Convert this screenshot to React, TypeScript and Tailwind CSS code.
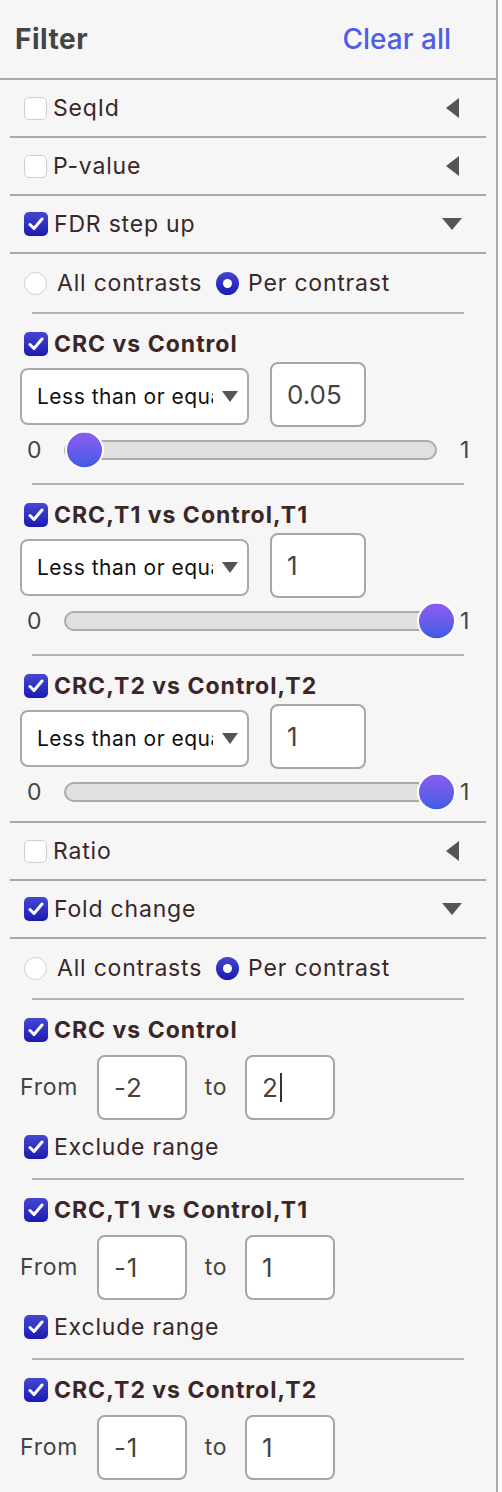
import React from "react";

const labelText = "text-[23px] tracking-[0.8px] text-[#3b2628]";

function Checkbox({ checked }: { checked: boolean }) {
  if (!checked) {
    return <span className="block h-[23px] w-[23px] shrink-0 rounded-[5px] border border-[#cfcfcf] bg-white" />;
  }
  return (
    <span className="flex h-[24px] w-[24px] shrink-0 items-center justify-center rounded-[5px] bg-gradient-to-b from-[#4547d2] to-[#1d18b0]">
      <svg width="16" height="14" viewBox="0 0 16 14">
        <path d="M2 7.5 L6 11.5 L14 2" fill="none" stroke="#fff" strokeWidth="3" strokeLinecap="round" strokeLinejoin="round" />
      </svg>
    </span>
  );
}

function Radio({ checked }: { checked: boolean }) {
  if (!checked) {
    return <span className="block h-[23px] w-[23px] shrink-0 rounded-full border border-[#cfcfcf] bg-white" />;
  }
  return (
    <span className="flex h-[23px] w-[23px] shrink-0 items-center justify-center rounded-full bg-gradient-to-b from-[#4245d0] to-[#1d18b0]">
      <span className="block h-[9px] w-[9px] rounded-full bg-white" />
    </span>
  );
}

function CaretLeft() {
  return (
    <svg width="13" height="20" viewBox="0 0 13 20" className="ml-auto">
      <polygon points="13,0 0,10 13,20" fill="#555" />
    </svg>
  );
}

function CaretDown() {
  return (
    <svg width="20" height="12" viewBox="0 0 20 12" className="ml-auto -mr-[3px]">
      <polygon points="0,0 20,0 10,12" fill="#555" />
    </svg>
  );
}

function SectionRow({ label, checked, open }: { label: string; checked: boolean; open?: boolean }) {
  return (
    <div className="flex h-[58px] items-center border-b-2 border-[#aaa] pl-[14px] pr-[27px]">
      <Checkbox checked={checked} />
      <span className={`ml-[6px] ${labelText}`}>{label}</span>
      {open ? <CaretDown /> : <CaretLeft />}
    </div>
  );
}

function RadioRow({ h }: { h: string }) {
  return (
    <div className={`flex items-center pl-[14px] ${h}`}>
      <Radio checked={false} />
      <span className={`ml-[10px] ${labelText}`}>All contrasts</span>
      <span className="ml-[14px]">
        <Radio checked />
      </span>
      <span className={`ml-[9px] ${labelText}`}>Per contrast</span>
    </div>
  );
}

function InnerSep() {
  return <div className="mx-[22px] h-[2px] bg-[#b3b3b3]" />;
}

function ContrastTitle({ title }: { title: string }) {
  return (
    <div className="flex h-[24px] items-center pl-[14px]">
      <Checkbox checked />
      <span className="ml-[6px] text-[23px] font-bold tracking-[1px] text-[#3b2628]">{title}</span>
    </div>
  );
}

function Slider({ atMax }: { atMax: boolean }) {
  return (
    <div className="mt-[3px] flex h-[40px] items-center pl-[17px] text-[23px] text-[#444]">
      <span className="w-[37px]">0</span>
      <div className="relative h-[20px] w-[373px] rounded-full border-2 border-[#ababab] bg-[#e0e0e0]">
        <span
          className={`absolute top-1/2 h-[39px] w-[39px] -translate-y-1/2 rounded-full border-2 border-white bg-gradient-to-b from-[#8c5cf0] to-[#3d5be4] ${
            atMax ? "left-[351px]" : "-left-[1px]"
          }`}
        />
      </div>
      <span className="ml-[23px]">1</span>
    </div>
  );
}

function FdrContrast({ title, value, atMax, last }: { title: string; value: string; atMax: boolean; last?: boolean }) {
  return (
    <div className={`pt-[18px] ${last ? "pb-[9px]" : "pb-[13px]"}`}>
      <ContrastTitle title={title} />
      <div className="mt-[6px] flex h-[65px] items-start pl-[10px]">
        <div className="mt-[6px] flex h-[57px] w-[229px] items-center rounded-[8px] border-2 border-[#aaa] bg-white pl-[15px]">
          <span className="w-[176px] overflow-hidden whitespace-nowrap text-[21px] tracking-[0.5px] text-[#111]">
            Less than or equal to
          </span>
          <svg width="16" height="11" viewBox="0 0 16 11" className="ml-[9px]">
            <polygon points="0,0 16,0 8,11" fill="#555" />
          </svg>
        </div>
        <div className="ml-[21px] flex h-[65px] w-[96px] items-center rounded-[8px] border-2 border-[#a6a6a6] bg-white pl-[15px] text-[26px] text-[#444]">
          {value}
        </div>
      </div>
      <Slider atMax={atMax} />
    </div>
  );
}

function NumBox({ value, caret }: { value: string; caret?: boolean }) {
  return (
    <div className="flex h-[65px] w-[90px] items-center rounded-[8px] border-2 border-[#a6a6a6] bg-white pl-[15px] text-[26px] text-[#444]">
      {value}
      {caret && <span className="ml-[1px] block h-[29px] w-[2px] bg-[#333]" />}
    </div>
  );
}

function FoldContrast({ title, from, to, caret }: { title: string; from: string; to: string; caret?: boolean }) {
  return (
    <div className="pt-[18px] pb-[19px]">
      <ContrastTitle title={title} />
      <div className="mt-[13px] flex h-[65px] items-center pl-[10px] text-[23px] tracking-[0.8px] text-[#444]">
        <span className="w-[77px]">From</span>
        <NumBox value={from} />
        <span className="w-[58px] text-center">to</span>
        <NumBox value={to} caret={caret} />
      </div>
      <div className="mt-[15px] flex h-[24px] items-center pl-[14px]">
        <Checkbox checked />
        <span className={`ml-[6px] ${labelText}`}>Exclude range</span>
      </div>
    </div>
  );
}

export default function App() {
  return (
    <div className="min-h-screen w-[498px] border-r-2 border-[#aaa] bg-[#f6f6f6] font-['Inter','Liberation_Sans',sans-serif]">
      {/* Header */}
      <div className="flex h-[80px] items-center justify-between border-b-2 border-[#aaa] pl-[15px] pr-[45px]">
        <h1 className="text-[28px] font-bold tracking-[0.5px] text-[#444]">Filter</h1>
        <button className="text-[28px] font-medium text-[#4e5ee8]">Clear all</button>
      </div>

      <div className="px-[10px]">
        <SectionRow label="SeqId" checked={false} />
        <SectionRow label="P-value" checked={false} />
        <SectionRow label="FDR step up" checked open />

        <div className="border-b-2 border-[#aaa]">
          <RadioRow h="h-[58px]" />
          <InnerSep />
          <FdrContrast title="CRC vs Control" value="0.05" atMax={false} />
          <InnerSep />
          <FdrContrast title="CRC,T1 vs Control,T1" value="1" atMax />
          <InnerSep />
          <FdrContrast title="CRC,T2 vs Control,T2" value="1" atMax last />
        </div>

        <SectionRow label="Ratio" checked={false} />
        <SectionRow label="Fold change" checked open />

        <div>
          <RadioRow h="h-[59px]" />
          <InnerSep />
          <FoldContrast title="CRC vs Control" from="-2" to="2" caret />
          <InnerSep />
          <FoldContrast title="CRC,T1 vs Control,T1" from="-1" to="1" />
          <InnerSep />
          <FoldContrast title="CRC,T2 vs Control,T2" from="-1" to="1" />
        </div>
      </div>
    </div>
  );
}
